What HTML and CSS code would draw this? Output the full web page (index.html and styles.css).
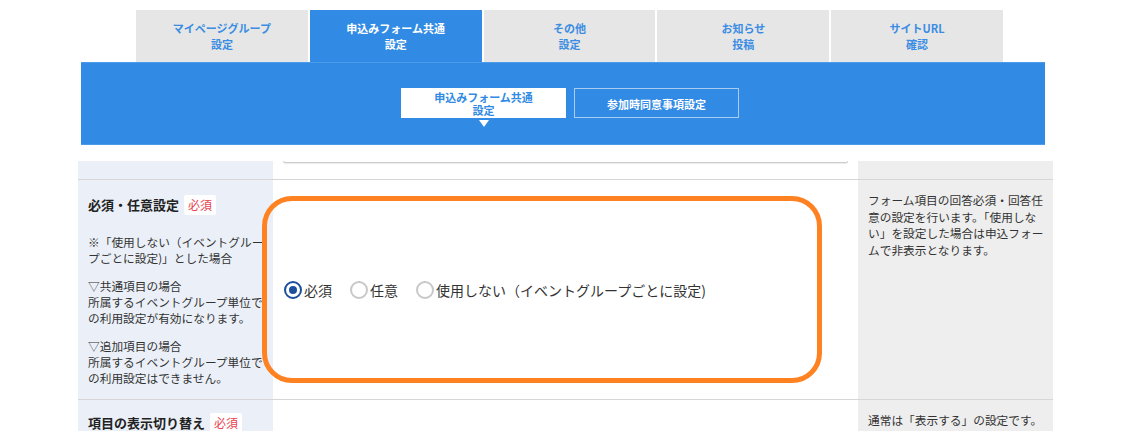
FILE: index.html
```html
<!DOCTYPE html>
<html lang="ja">
<head>
<meta charset="utf-8">
<title>申込みフォーム共通設定</title>
<link rel="stylesheet" href="styles.css">
</head>
<body>
<nav class="tabs">
  <div class="tab">マイページグループ<br>設定</div>
  <div class="tab active">申込みフォーム共通<br>設定</div>
  <div class="tab">その他<br>設定</div>
  <div class="tab">お知らせ<br>投稿</div>
  <div class="tab">サイトURL<br>確認</div>
</nav>
<div class="bluebar">
  <div class="subnav">
    <div class="subbtn current">申込みフォーム共通<br>設定<span class="arrow"></span></div>
    <div class="subbtn">参加時同意事項設定</div>
  </div>
</div>
<div class="content">
  <div class="row row-top">
    <div class="cell left"></div>
    <div class="cell mid"><div class="field"></div></div>
    <div class="cell right"></div>
  </div>
  <div class="row row-main">
    <div class="cell left">
      <div class="title">必須・任意設定<span class="badge">必須</span></div>
      <p class="note first">※「使用しない（イベントグループごとに設定)」とした場合</p>
      <p class="note">▽共通項目の場合<br>所属するイベントグループ単位での利用設定が有効になります。</p>
      <p class="note">▽追加項目の場合<br>所属するイベントグループ単位での利用設定はできません。</p>
    </div>
    <div class="cell mid radios">
      <label class="radio"><span class="dot on"></span>必須</label>
      <label class="radio"><span class="dot"></span>任意</label>
      <label class="radio"><span class="dot"></span>使用しない（イベントグループごとに設定)</label>
    </div>
    <div class="cell right">
      <p class="help">フォーム項目の回答必須・回答任意の設定を行います。「使用しない」を設定した場合は申込フォームで非表示となります。</p>
    </div>
  </div>
  <div class="row row-next">
    <div class="cell left">
      <div class="title">項目の表示切り替え<span class="badge">必須</span></div>
    </div>
    <div class="cell mid"></div>
    <div class="cell right">
      <p class="help">通常は「表示する」の設定です。</p>
    </div>
  </div>
  <div class="highlight"></div>
</div>
</body>
</html>
```
FILE: styles.css
```css
html, body {
  margin: 0;
  padding: 0;
  background: #ffffff;
  height: 431px;
  overflow: hidden;
}
body {
  font-family: "Noto Sans CJK JP", "Noto Sans", sans-serif;
  color: #333333;
}
.tabs {
  display: flex;
  gap: 2px;
  margin: 10px 0 0 136px;
  width: 867px;
}
.tab {
  flex: 1;
  height: 52px;
  box-sizing: border-box;
  padding-top: 10px;
  background: #e6e6e6;
  color: #3a8de3;
  font-size: 11px;
  font-weight: bold;
  line-height: 16px;
  text-align: center;
}
.tab.active {
  background: #318be4;
  color: #ffffff;
}
.bluebar {
  margin-left: 81px;
  width: 964px;
  height: 83px;
  box-sizing: border-box;
  background: #318ae3;
  border-top: 1px solid #4b9bea;
  border-bottom: 1px solid #4b9bea;
}
.subnav {
  display: flex;
  gap: 8px;
  padding: 25px 0 0 320px;
}
.subbtn {
  position: relative;
  width: 165px;
  height: 30px;
  box-sizing: border-box;
  border: 1px solid #a9cdf2;
  color: #ffffff;
  font-size: 11px;
  font-weight: bold;
  line-height: 30px;
  text-align: center;
}
.subbtn.current {
  background: #ffffff;
  border-color: #ffffff;
  color: #318ae3;
  line-height: 13px;
  padding-top: 2px;
}
.arrow {
  position: absolute;
  left: 77px;
  top: 31px;
  width: 0;
  height: 0;
  border-left: 5px solid transparent;
  border-right: 5px solid transparent;
  border-top: 7px solid #ffffff;
}
.content {
  position: relative;
  margin: 16px 0 0 78px;
  width: 975px;
}
.row {
  display: grid;
  grid-template-columns: 195px 585px 195px;
  border-bottom: 1px solid #d6d6d6;
}
.cell.left {
  background: #ebf0f8;
  padding: 0 5px 0 10px;
}
.cell.right {
  background: #eeeeee;
  padding: 0 5px 0 10px;
}
.row-top {
  height: 18px;
}
.field {
  margin: 0 10px;
  height: 1px;
  border: 1px solid #cccccc;
  border-top: none;
  border-radius: 0 0 5px 5px;
  box-shadow: 0 1px 1px rgba(0,0,0,0.08);
}
.row-main {
  height: 220px;
  box-sizing: border-box;
}
.row-main .cell.left {
  padding-top: 15px;
}
.title {
  font-size: 13px;
  font-weight: bold;
  line-height: 20px;
  color: #222222;
  display: flex;
  align-items: center;
}
.badge {
  margin-left: 5px;
  background: #ffffff;
  color: #e8434f;
  font-size: 12px;
  font-weight: normal;
  padding: 0 4px;
  line-height: 20px;
  border-radius: 2px;
}
.note {
  margin: 12px 0 0;
  font-size: 11.7px;
  line-height: 16px;
}
.note.first {
  margin-top: 19px;
}
.radios {
  display: flex;
  align-items: center;
  padding: 0 11px;
  gap: 18px;
}
.radio {
  display: flex;
  align-items: center;
  font-size: 14px;
  color: #333333;
  line-height: 20px;
}
.dot {
  width: 18px;
  height: 18px;
  box-sizing: border-box;
  border: 2px solid #c8c8c8;
  border-radius: 50%;
  margin-right: 2px;
  position: relative;
}
.dot.on {
  border-color: #1c4f9c;
}
.dot.on::after {
  content: "";
  position: absolute;
  left: 3px;
  top: 3px;
  width: 8px;
  height: 8px;
  border-radius: 50%;
  background: #1c4f9c;
}
.help {
  margin: 12px 0 0;
  font-size: 11.7px;
  line-height: 16.7px;
  color: #333333;
}
.row-next {
  height: 60px;
}
.row-next .cell.left {
  padding-top: 13px;
}
.highlight {
  position: absolute;
  left: 184px;
  top: 35px;
  width: 560px;
  height: 187px;
  box-sizing: border-box;
  border: 5px solid #fe8221;
  border-radius: 30px;
}
```
